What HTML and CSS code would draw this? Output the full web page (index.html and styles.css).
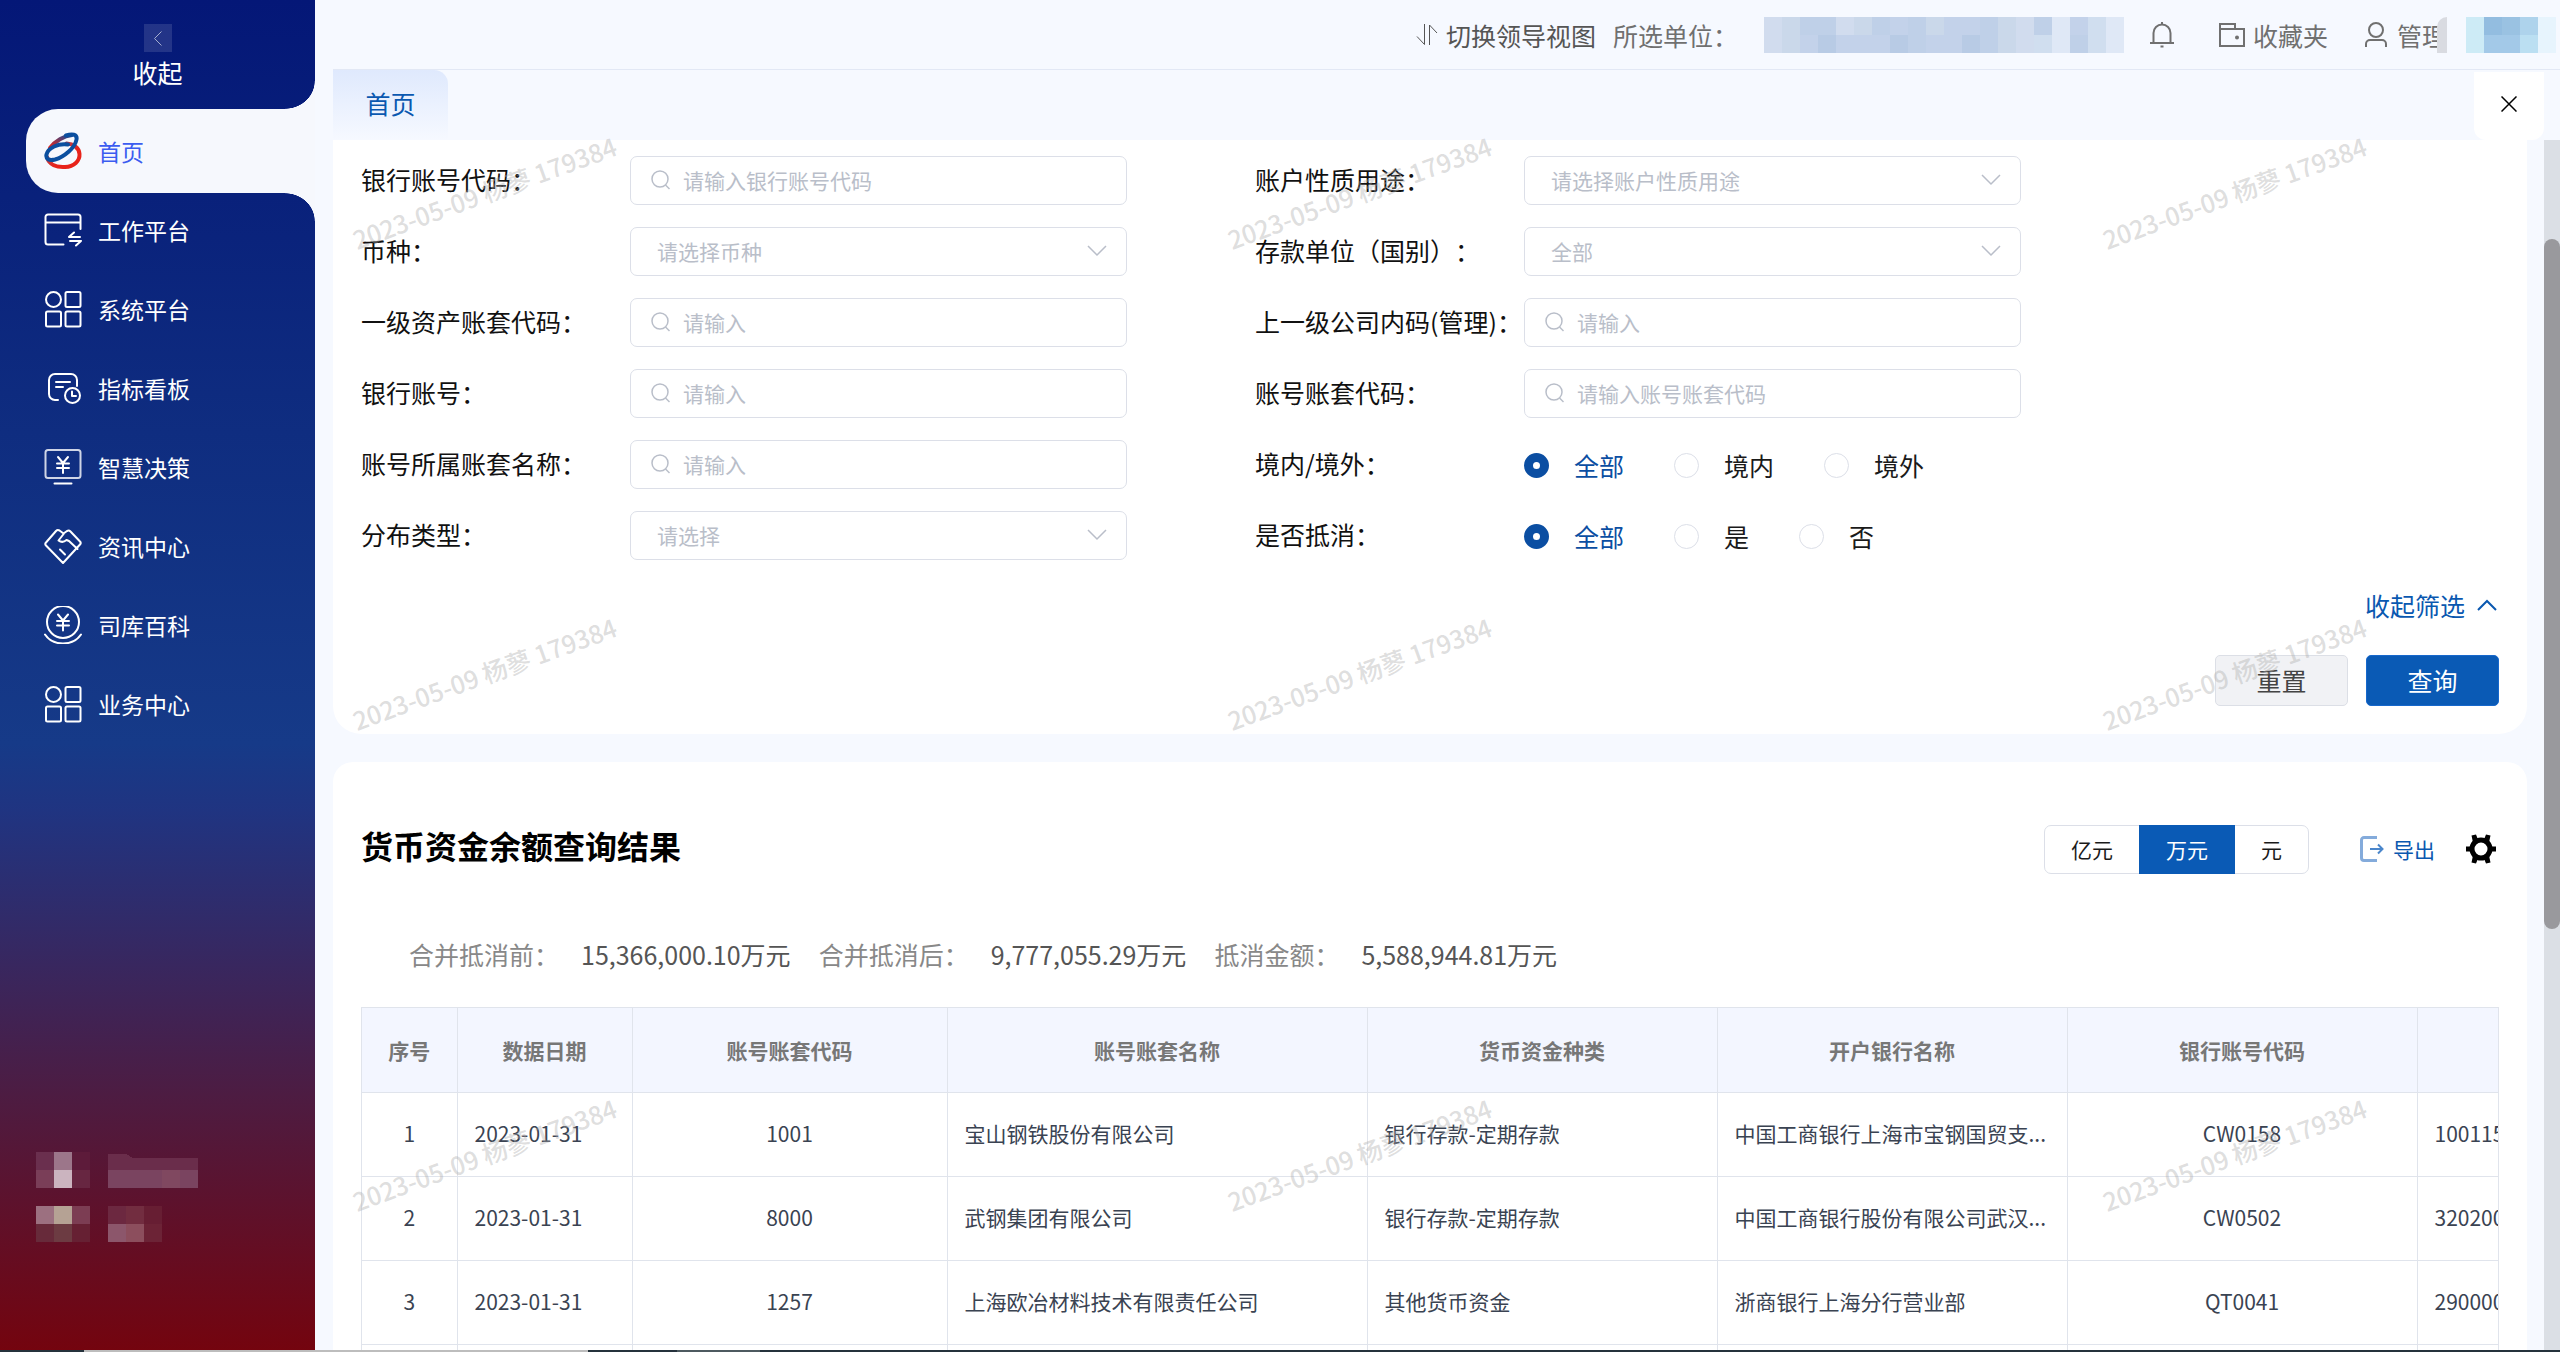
FILE: index.html
```html
<!DOCTYPE html>
<html lang="zh-CN">
<head>
<meta charset="utf-8">
<title>货币资金余额查询</title>
<link rel="stylesheet" href="styles.css">
</head>
<body>
<svg class="defs" aria-hidden="true">
  <symbol id="search" viewBox="0 0 20 20"><circle cx="9" cy="9" r="8"/><path d="M14.5 15l4 4"/></symbol>
  <symbol id="grid" viewBox="0 0 38 38"><circle cx="9.500" cy="9.500" r="7.500"/><rect x="21.500" y="2" width="15" height="15" rx="1.500"/><rect x="2" y="21.500" width="15" height="15" rx="1.500"/><rect x="21.500" y="21.500" width="15" height="15" rx="1.500"/></symbol>
</svg>

<aside class="sidebar">
  <button class="collapse" type="button">
    <span class="collapse-box"><svg width="28" height="28" viewBox="0 0 28 28"><path d="M17.500 7.500l-7 7 7 7"/></svg></span>
    收起
  </button>
  <nav class="menu">
    <a class="item active" href="#">
      <svg class="logo" width="38" height="38" viewBox="0 0 38 38">
        <defs>
          <linearGradient id="red" x1="0" y1="0" x2="1" y2="1"><stop offset="0" stop-color="#0b4f9f"/><stop offset=".35" stop-color="#c33a41"/><stop offset=".6" stop-color="#e8231a"/></linearGradient>
          <linearGradient id="link" x1="1" y1="0" x2="0" y2="1"><stop offset="0" stop-color="#0b4f9f"/><stop offset="1" stop-color="#e8231a"/></linearGradient>
        </defs>
        <path d="M3 25C5 33 13 35.500 21 35c9-.6 15-6 14.500-13-.3-6-6-10-13-10.500" stroke="url(#red)" stroke-width="4"/>
        <path d="M6 16C11 9 20 4 28 3" stroke="url(#link)" stroke-width="4"/>
        <path d="M22 3.500c6-2 11.500-1.500 10.500 4C31 16 20 25 11 27.500c-6 1.500-9.500-.5-8.500-5C4 16 14 11 24 12.500" stroke="#0b4f9f" stroke-width="4"/>
      </svg>
      首页</a>
    <a class="item" href="#"><svg width="38" height="38" viewBox="0 0 38 38"><path d="M19.500 33.500H4a2.500 2.500 0 0 1-2.500-2.500V6A2.500 2.500 0 0 1 4 3.500h30A2.500 2.500 0 0 1 36.500 6v12M1.500 11.500h35M25 26h11M25 26l5-4.500M37 30H26M37 30l-5 4.500"/></svg>工作平台</a>
    <a class="item" href="#"><svg width="38" height="38"><use href="#grid"/></svg>系统平台</a>
    <a class="item" href="#"><svg width="38" height="38" viewBox="0 0 38 38"><path d="M14 31h-3a6 6 0 0 1-6-6V11a6 6 0 0 1 6-6h16a6 6 0 0 1 6 6v6M12 13h14M12 18h7"/><circle cx="28.500" cy="26.500" r="7.500"/><path d="M28 22.500v4.500h4"/></svg>指标看板</a>
    <a class="item" href="#"><svg width="38" height="38" viewBox="0 0 38 38"><rect x="1.500" y="2" width="35" height="28" rx="2.500" opacity=".8"/><path d="M10.500 35.500h17M14 9l5 6 5-6M19 15v10M13 15.500h12M13 20h12"/></svg>智慧决策</a>
    <a class="item" href="#"><svg width="38" height="38" viewBox="0 0 38 38"><path d="M19 36L2 18.500q-1.500-1.500 0-3L12 4q1.500-1.500 3.500-.5L19.500 6.500 23 4q2-1 3.500.5L36 14.500q1.500 1.500 0 3zM20 6.500l-5.500 7q4 3 8-.5l2.500 1 8.500 8M16 22.500l5 5"/></svg>资讯中心</a>
    <a class="item" href="#"><svg width="38" height="38" viewBox="0 0 38 38"><circle cx="19" cy="16" r="16"/><path d="M1 28.500c8 12 28 12 36 0M14 8.500l5 6 5-6M19 14.500v10M13 15h12M13 19.500h12"/></svg>司库百科</a>
    <a class="item" href="#"><svg width="38" height="38"><use href="#grid"/></svg>业务中心</a>
  </nav>
  <svg class="side-foot" width="162" height="90" viewBox="0 0 9 5" shape-rendering="crispEdges" aria-hidden="true">
    <path fill="#6a2f4e" d="M0 0h1v1H0z"/><path fill="#9c768a" d="M1 0h1v1H1z"/><path fill="#5d1b3a" d="M2 0h1v1H2z"/>
    <path fill="#7a3e58" d="M0 1h1v1H0z"/><path fill="#cbb4bf" d="M1 1h1v1H1z"/><path fill="#672641" d="M2 1h1v1H2z"/>
    <path fill="#6a2d4b" d="M4 .1h1l.4.25H9V1H4z"/><path fill="#7a4460" d="M4 1h5v1H4z"/><path fill="#804860" d="M7 1h1v1H7z"/>
    <path fill="#9c7080" d="M0 3h1v1H0z"/><path fill="#b5a294" d="M1 3h1v1H1z"/><path fill="#7c3d53" d="M2 3h1v1H2z"/>
    <path fill="#672a3a" d="M0 4h1v1H0z"/><path fill="#6c3b42" d="M1 4h1v1H1z"/><path fill="#662033" d="M2 4h1v1H2z"/>
    <path fill="#6c2840" d="M4 3h1v1H4z"/><path fill="#722d40" d="M5 3h1v1H5z"/><path fill="#671e33" d="M6 3h1v1H6z"/>
    <path fill="#8c566b" d="M4 4h1v1H4z"/><path fill="#8c4e5d" d="M5 4h1v1H5z"/><path fill="#6c2336" d="M6 4h1v1H6z"/>
  </svg>
</aside>

<main class="main">
  <header class="topbar">
    <a class="top-link switch" href="#"><svg width="22" height="24" viewBox="0 0 22 24"><path d="M8.500 1v20.500L1 13.500M13.500 22V2l7.500 8"/></svg>切换领导视图</a>
    <span class="unit-label">所选单位：</span>
    <svg class="unit-value" width="360" height="36" viewBox="0 0 20 2" shape-rendering="crispEdges" aria-hidden="true">
      <path fill="#c3d2ea" d="M0 0h20v2H0z"/>
      <path fill="#d1dcee" d="M0 0h1v2H0zM4 0h1v1H4zM14 0h1v2h-1z"/>
      <path fill="#cad8ea" d="M1 0h1v2H1zM5 0h1v1H5zM9 0h1v1H9zM13 0h1v2h-1z"/>
      <path fill="#bfd0e8" d="M2 0h2v1H2zM6 0h1v1H6zM8 0h1v2H8zM12 0h1v2h-1zM15 0h1v1h-1zM17 1h1v1h-1z"/>
      <path fill="#b8cbe5" d="M3 1h1v1H3zM7 1h1v1H7zM11 1h1v1h-1z"/>
      <path fill="#dfe8f6" d="M16 0h1v2h-1zM18 0h2v2h-2z"/>
      <path fill="#d0deef" d="M18 0h1v2h-1zM15 1h1v1h-1z"/>
    </svg>
    <button class="bell" type="button" aria-label="通知"><svg width="24" height="26" viewBox="0 0 24 26"><path d="M0 21h24M3.500 21V11a8.500 8.500 0 0 1 17 0v10M12 0v3M10.500 24.500h3"/></svg></button>
    <a class="top-link fav" href="#"><svg width="26" height="24" viewBox="0 0 26 24"><path d="M1 1h15v5h9v17H1zM1 6h15"/><circle cx="18" cy="14.500" r="1" fill="#777"/></svg>收藏夹</a>
    <a class="top-link user" href="#"><svg width="22" height="25" viewBox="0 0 22 25"><circle cx="11" cy="8" r="7"/><path d="M1 25v-3a4 4 0 0 1 4-4h12a4 4 0 0 1 4 4v3"/></svg>管理<span class="user-cut"></span></a>
    <svg class="user-value" width="90" height="36" viewBox="0 0 5 2" shape-rendering="crispEdges" aria-hidden="true">
      <path fill="#cdebf6" d="M0 0h1v2H0z"/><path fill="#93bde0" d="M1 0h1v1H1z"/><path fill="#9ac2e2" d="M2 0h1v1H2z"/><path fill="#a3c9e8" d="M1 1h2v1H1z"/><path fill="#aed3ec" d="M3 0h1v1H3z"/><path fill="#bbdff2" d="M3 1h1v1H3z"/><path fill="#e7f4fd" d="M4 0h1v2H4z"/>
    </svg>
  </header>
  <div class="tabs">
    <a class="tab" href="#">首页</a>
    <button class="close" type="button" aria-label="关闭"><svg width="16" height="16" viewBox="0 0 16 16"><path d="M.5.5l15 15M15.500.5l-15 15"/></svg></button>
  </div>

  <div class="scroll-area">
    <section class="card filter">
      <form class="fields">
        <div class="field"><label for="f1">银行账号代码：</label><div class="box"><svg class="mag"><use href="#search"/></svg><input id="f1" type="text" placeholder="请输入银行账号代码"></div></div>
        <div class="field"><label for="f2">账户性质用途：</label><div class="box"><select id="f2"><option>请选择账户性质用途</option></select><svg class="chev" viewBox="0 0 20 12"><path d="M1 1l9 9 9-9"/></svg></div></div>
        <div class="field"><label for="f3">币种：</label><div class="box"><select id="f3"><option>请选择币种</option></select><svg class="chev" viewBox="0 0 20 12"><path d="M1 1l9 9 9-9"/></svg></div></div>
        <div class="field"><label for="f4">存款单位（国别）：</label><div class="box"><select id="f4"><option>全部</option></select><svg class="chev" viewBox="0 0 20 12"><path d="M1 1l9 9 9-9"/></svg></div></div>
        <div class="field"><label for="f5">一级资产账套代码：</label><div class="box"><svg class="mag"><use href="#search"/></svg><input id="f5" type="text" placeholder="请输入"></div></div>
        <div class="field"><label for="f6">上一级公司内码(管理)：</label><div class="box"><svg class="mag"><use href="#search"/></svg><input id="f6" type="text" placeholder="请输入"></div></div>
        <div class="field"><label for="f7">银行账号：</label><div class="box"><svg class="mag"><use href="#search"/></svg><input id="f7" type="text" placeholder="请输入"></div></div>
        <div class="field"><label for="f8">账号账套代码：</label><div class="box"><svg class="mag"><use href="#search"/></svg><input id="f8" type="text" placeholder="请输入账号账套代码"></div></div>
        <div class="field"><label for="f9">账号所属账套名称：</label><div class="box"><svg class="mag"><use href="#search"/></svg><input id="f9" type="text" placeholder="请输入"></div></div>
        <div class="field" role="radiogroup" aria-labelledby="g1"><span id="g1">境内/境外：</span><div class="radios">
          <label><input type="radio" name="area" checked><span>全部</span></label><label><input type="radio" name="area"><span>境内</span></label><label><input type="radio" name="area"><span>境外</span></label></div></div>
        <div class="field"><label for="f10">分布类型：</label><div class="box"><select id="f10"><option>请选择</option></select><svg class="chev" viewBox="0 0 20 12"><path d="M1 1l9 9 9-9"/></svg></div></div>
        <div class="field" role="radiogroup" aria-labelledby="g2"><span id="g2">是否抵消：</span><div class="radios">
          <label><input type="radio" name="offset" checked><span>全部</span></label><label><input type="radio" name="offset"><span>是</span></label><label><input type="radio" name="offset"><span>否</span></label></div></div>
      </form>
      <a class="fold" href="#">收起筛选<svg width="20" height="12" viewBox="0 0 20 12"><path d="M1 11l9-9 9 9"/></svg></a>
      <div class="actions"><button class="btn" type="button">重置</button><button class="btn primary" type="button">查询</button></div>
    </section>

    <section class="card result">
      <div class="result-head">
        <h1>货币资金余额查询结果</h1>
        <div class="seg"><button type="button">亿元</button><button class="on" type="button">万元</button><button type="button">元</button></div>
        <button class="export" type="button"><svg width="24" height="26" viewBox="0 0 24 26"><path d="M17 1.500H4A2.500 2.500 0 0 0 1.500 4v18A2.500 2.500 0 0 0 4 24.500h13" stroke="#84abdb" stroke-width="3"/><path d="M10 13h12M18 8.500l4.500 4.500-4.500 4.500" stroke="#4a86cb" stroke-width="2"/></svg>导出</button>
        <button class="gear" type="button" aria-label="设置"><svg width="30" height="30" viewBox="0 0 30 30"><circle cx="15" cy="15" r="9" fill="none" stroke="#000" stroke-width="5"/><path d="M0 12.500h5v5H0zM25 12.500h5v5h-5zM5.500 1.500l4.500-1 2 5-5 3zM24.500 1.500l-4.500-1-2 5 5 3zM5.500 28.500l4.500 1 2-5-5-3zM24.500 28.500l-4.500 1-2-5 5-3z"/></svg></button>
      </div>
      <dl class="stats">
        <div><dt>合并抵消前：</dt><dd>15,366,000.10万元</dd></div>
        <div><dt>合并抵消后：</dt><dd>9,777,055.29万元</dd></div>
        <div><dt>抵消金额：</dt><dd>5,588,944.81万元</dd></div>
      </dl>
      <div class="table-wrap">
        <table>
          <colgroup><col class="c-no"><col class="c-date"><col class="c-code"><col class="c-name"><col class="c-std"><col class="c-std"><col class="c-std"><col class="c-std"></colgroup>
          <thead><tr><th>序号</th><th>数据日期</th><th>账号账套代码</th><th>账号账套名称</th><th>货币资金种类</th><th>开户银行名称</th><th>银行账号代码</th><th></th></tr></thead>
          <tbody>
            <tr><td class="mid">1</td><td>2023-01-31</td><td class="mid">1001</td><td>宝山钢铁股份有限公司</td><td>银行存款-定期存款</td><td>中国工商银行上海市宝钢国贸支...</td><td class="mid">CW0158</td><td>100115</td></tr>
            <tr><td class="mid">2</td><td>2023-01-31</td><td class="mid">8000</td><td>武钢集团有限公司</td><td>银行存款-定期存款</td><td>中国工商银行股份有限公司武汉...</td><td class="mid">CW0502</td><td>320200</td></tr>
            <tr><td class="mid">3</td><td>2023-01-31</td><td class="mid">1257</td><td>上海欧冶材料技术有限责任公司</td><td>其他货币资金</td><td>浙商银行上海分行营业部</td><td class="mid">QT0041</td><td>290000</td></tr>
            <tr><td></td><td></td><td></td><td></td><td></td><td></td><td></td><td></td></tr>
          </tbody>
        </table>
      </div>
    </section>
    <div class="track"><div class="thumb"></div></div>
  </div>

  <div class="watermarks" aria-hidden="true">
    <span>2023-05-09 杨蓼 179384</span><span>2023-05-09 杨蓼 179384</span><span>2023-05-09 杨蓼 179384</span>
    <span>2023-05-09 杨蓼 179384</span><span>2023-05-09 杨蓼 179384</span><span>2023-05-09 杨蓼 179384</span>
    <span>2023-05-09 杨蓼 179384</span><span>2023-05-09 杨蓼 179384</span><span>2023-05-09 杨蓼 179384</span>
  </div>
</main>
<div class="desktop-edge"></div>
</body>
</html>
```
FILE: styles.css
```css
* { box-sizing: border-box; }

body {
  margin: 0;
  display: flex;
  height: 100vh;
  overflow: hidden;
  background: #f6f9ff;
  font-family: "Noto Sans CJK SC", "Noto Sans", sans-serif;
  font-weight: 400;
  font-size: 25px;
  line-height: 36px;
  text-spacing-trim: space-all;
  color: #1a1a1a;
}

a { color: inherit; text-decoration: none; }
button { padding: 0; border: 0; background: none; font: inherit; color: inherit; }
svg { fill: none; stroke: currentColor; flex: none; }
.defs { position: absolute; width: 0; height: 0; }

/* Sidebar */
.sidebar {
  flex: none;
  width: 315px;
  display: flex;
  flex-direction: column;
  color: #fff;
  background: linear-gradient(#041777 0, #0f2d80 32%, #163a88 55%, #203481 60%, #4d1c42 81%, #5b132f 88%, #74040e 100%);
}
.collapse {
  height: 109px;
  padding-top: 24px;
  display: flex;
  flex-direction: column;
  align-items: center;
  gap: 2px;
}
.collapse-box { height: 28px; background: rgba(255, 255, 255, .12); color: #a4adcf; }
.collapse-box svg { display: block; stroke-width: 1; }
.item {
  display: flex;
  align-items: center;
  gap: 16px;
  height: 79px;
  padding: 0 0 6px 44px;
  font-size: 23px;
}
.item svg { stroke-width: 2; stroke-linecap: round; stroke-linejoin: round; }
.active {
  position: relative;
  height: 84px;
  margin-left: 26px;
  padding: 0 0 0 18px;
  background: #f6f8fd;
  border-radius: 32px 0 0 32px;
  color: #3b5cf0;
}
.active::before, .active::after {
  content: "";
  position: absolute;
  right: 0;
  width: 30px;
  height: 28px;
}
.active::before { bottom: 100%; background: radial-gradient(30px 28px at 0 0, transparent 98%, #f6f8fd 100%); }
.active::after { top: 100%; background: radial-gradient(30px 28px at 0 100%, transparent 98%, #f6f8fd 100%); }
.side-foot { margin: auto 0 110px 36px; stroke: none; }

/* Top bar */
.main { position: relative; flex: 1; min-width: 0; display: flex; flex-direction: column; }
.topbar {
  flex: none;
  display: flex;
  align-items: center;
  justify-content: flex-end;
  height: 70px;
  margin-left: 18px;
  padding-right: 4px;
  border-bottom: 1px solid #e2e8f5;
  color: #707070;
}
.top-link { display: flex; align-items: center; gap: 8px; }
.topbar svg { stroke-width: 2; }
.switch { margin-right: 17px; color: #555; }
.topbar .switch svg { stroke-width: 1; }
.unit-label { margin-right: 26px; }
.topbar .unit-value, .topbar .user-value { stroke: none; }
.bell { display: flex; margin: 0 45px 0 26px; }
.fav { margin-right: 37px; }
.user { position: relative; margin-right: 19px; gap: 10px; }
.user-cut {
  position: absolute;
  right: 0;
  width: 10px;
  height: 36px;
  background: #d9dbe1;
  border-radius: 10px 0 0 0;
}

/* Tabs */
.tabs { flex: none; display: flex; justify-content: space-between; height: 70px; margin-left: 18px; padding-right: 16px; }
.tab {
  width: 115px;
  line-height: 66px;
  text-align: center;
  color: #0a58b0;
  border-top-right-radius: 14px;
  background: linear-gradient(#dfe9fd, #f6f9ff);
}
.close {
  display: flex;
  align-items: center;
  justify-content: center;
  width: 70px;
  height: 68px;
  margin-top: 2px;
  background: #fff;
  color: #000;
  border-radius: 0 0 12px 12px;
}
.close svg { margin-bottom: 4px; stroke-width: 1.500; }

/* Cards */
.scroll-area { position: relative; flex: 1; min-height: 0; overflow: hidden; padding: 0 33px 0 18px; }
.card { background: #fff; padding: 0 28px; }
.filter { padding-top: 5px; padding-bottom: 28px; border-radius: 0 0 28px 28px; }
.result { margin-top: 28px; padding-top: 60px; border-radius: 20px 20px 0 0; }

.fields { display: grid; grid-template-columns: 23fr 23fr 9fr; grid-auto-rows: 71px; }
.fields .field:nth-child(odd) { grid-column: 1; }
.fields .field:nth-child(even) { grid-column: 2; }
.field { display: flex; align-items: center; padding-right: 128px; white-space: nowrap; }
.field > label, .field > span { flex: none; width: 269px; padding-bottom: 4px; color: #111; }
.box { position: relative; flex: 1; height: 49px; }
.box input, .box select {
  width: 100%;
  height: 49px;
  padding: 0 26px 2px;
  border: 1px solid #dcdfe8;
  border-radius: 7px;
  background: #fff;
  font: inherit;
  font-size: 21px;
  color: #b9bec9;
  appearance: none;
}
.box input { padding-left: 52px; }
.box input::placeholder { color: #b9bec9; opacity: 1; }
.mag { position: absolute; left: 21px; top: 14px; width: 20px; height: 20px; color: #b9bec9; stroke-width: 1.500; }
.chev { position: absolute; right: 20px; top: 18px; width: 20px; height: 12px; color: #b9bec9; stroke-width: 1.500; }

.radios { display: flex; gap: 50px; }
.radios label { display: flex; align-items: center; gap: 25px; }
.radios input {
  appearance: none;
  width: 25px;
  height: 25px;
  margin: 2px 0 0;
  border: 1px solid #dcdfe8;
  border-radius: 50%;
  background: #fff;
}
.radios input:checked { border: 9px solid #0b4ea2; }
.radios input:checked + span { color: #0b4ea2; }

.fold { display: flex; align-items: center; justify-content: flex-end; gap: 12px; height: 68px; padding-right: 2px; color: #0a58b0; }
.fold svg { stroke-width: 2; }
.actions { display: flex; justify-content: flex-end; gap: 18px; margin-top: 16px; }
.btn { width: 133px; height: 51px; padding-bottom: 2px; border: 1px solid #dcdfe6; border-radius: 5px; background: #f1f2f5; color: #444; }
.primary { background: #0a5ab5; border-color: #1768cc; color: #fff; }

/* Results */
.result-head { display: flex; align-items: center; height: 54px; font-size: 21px; }
h1 { margin: 0 auto 0 0; padding-bottom: 8px; font-size: 32px; line-height: 48px; font-weight: 700; color: #000; }
.seg { display: flex; height: 49px; border: 1px solid #dcdfe8; border-radius: 7px; }
.seg button { padding: 0 26px; height: 47px; }
.seg .on { height: 49px; margin-top: -1px; padding: 0 27px; background: #0a5ab5; color: #fff; }
.export { display: flex; align-items: center; gap: 9px; margin: 0 31px 0 51px; color: #0a58b0; }
.gear { display: flex; margin-right: 3px; }
.gear svg { fill: #000; stroke: none; }

.stats { display: flex; gap: 28px; margin: 0 0 0 48px; height: 131px; padding-top: 60px; }
.stats div { display: flex; gap: 22px; }
.stats dt { color: #888; }
.stats dd { margin: 0; color: #555; }

.table-wrap { overflow: hidden; border: solid #e0e4ec; border-width: 1px 1px 0; }
table { width: 2405px; table-layout: fixed; border-collapse: collapse; font-size: 21px; line-height: 30px; }
.c-no { width: 95px; }
.c-date { width: 175px; }
.c-code { width: 315px; }
.c-name { width: 420px; }
.c-std { width: 350px; }
th, td { height: 84px; padding: 0 17px; border: solid #e0e4ec; border-width: 0 1px 1px 0; white-space: nowrap; text-align: left; color: #3a4352; }
th { background: #f3f6ff; text-align: center; font-weight: 700; color: #777; }
td { padding-bottom: 2px; }
td.mid { text-align: center; }

.track { position: absolute; top: 0; right: 0; bottom: 0; width: 16px; padding-top: 99px; background: #dbdfe5; }
.thumb { height: 62%; background: #99999d; border-radius: 8px; }

/* Overlay */
.watermarks {
  position: absolute;
  inset: 173px 0 0 30px;
  display: grid;
  grid-template-columns: repeat(3, 875px);
  grid-auto-rows: 481px;
  align-items: start;
  justify-items: start;
  overflow: visible;
  pointer-events: none;
}
.watermarks span { font-size: 25px; line-height: 38px; font-weight: 500; color: rgba(170, 170, 170, .4); transform: rotate(-20deg); white-space: nowrap; }

.desktop-edge {
  position: fixed;
  left: 0;
  right: 0;
  bottom: 0;
  height: 2px;
  background: linear-gradient(90deg, #25323c 84px, #bdbdbd 84px 588px, #25323c 588px 677px, #4d5a60 677px 760px, #25323c 760px);
}
```
